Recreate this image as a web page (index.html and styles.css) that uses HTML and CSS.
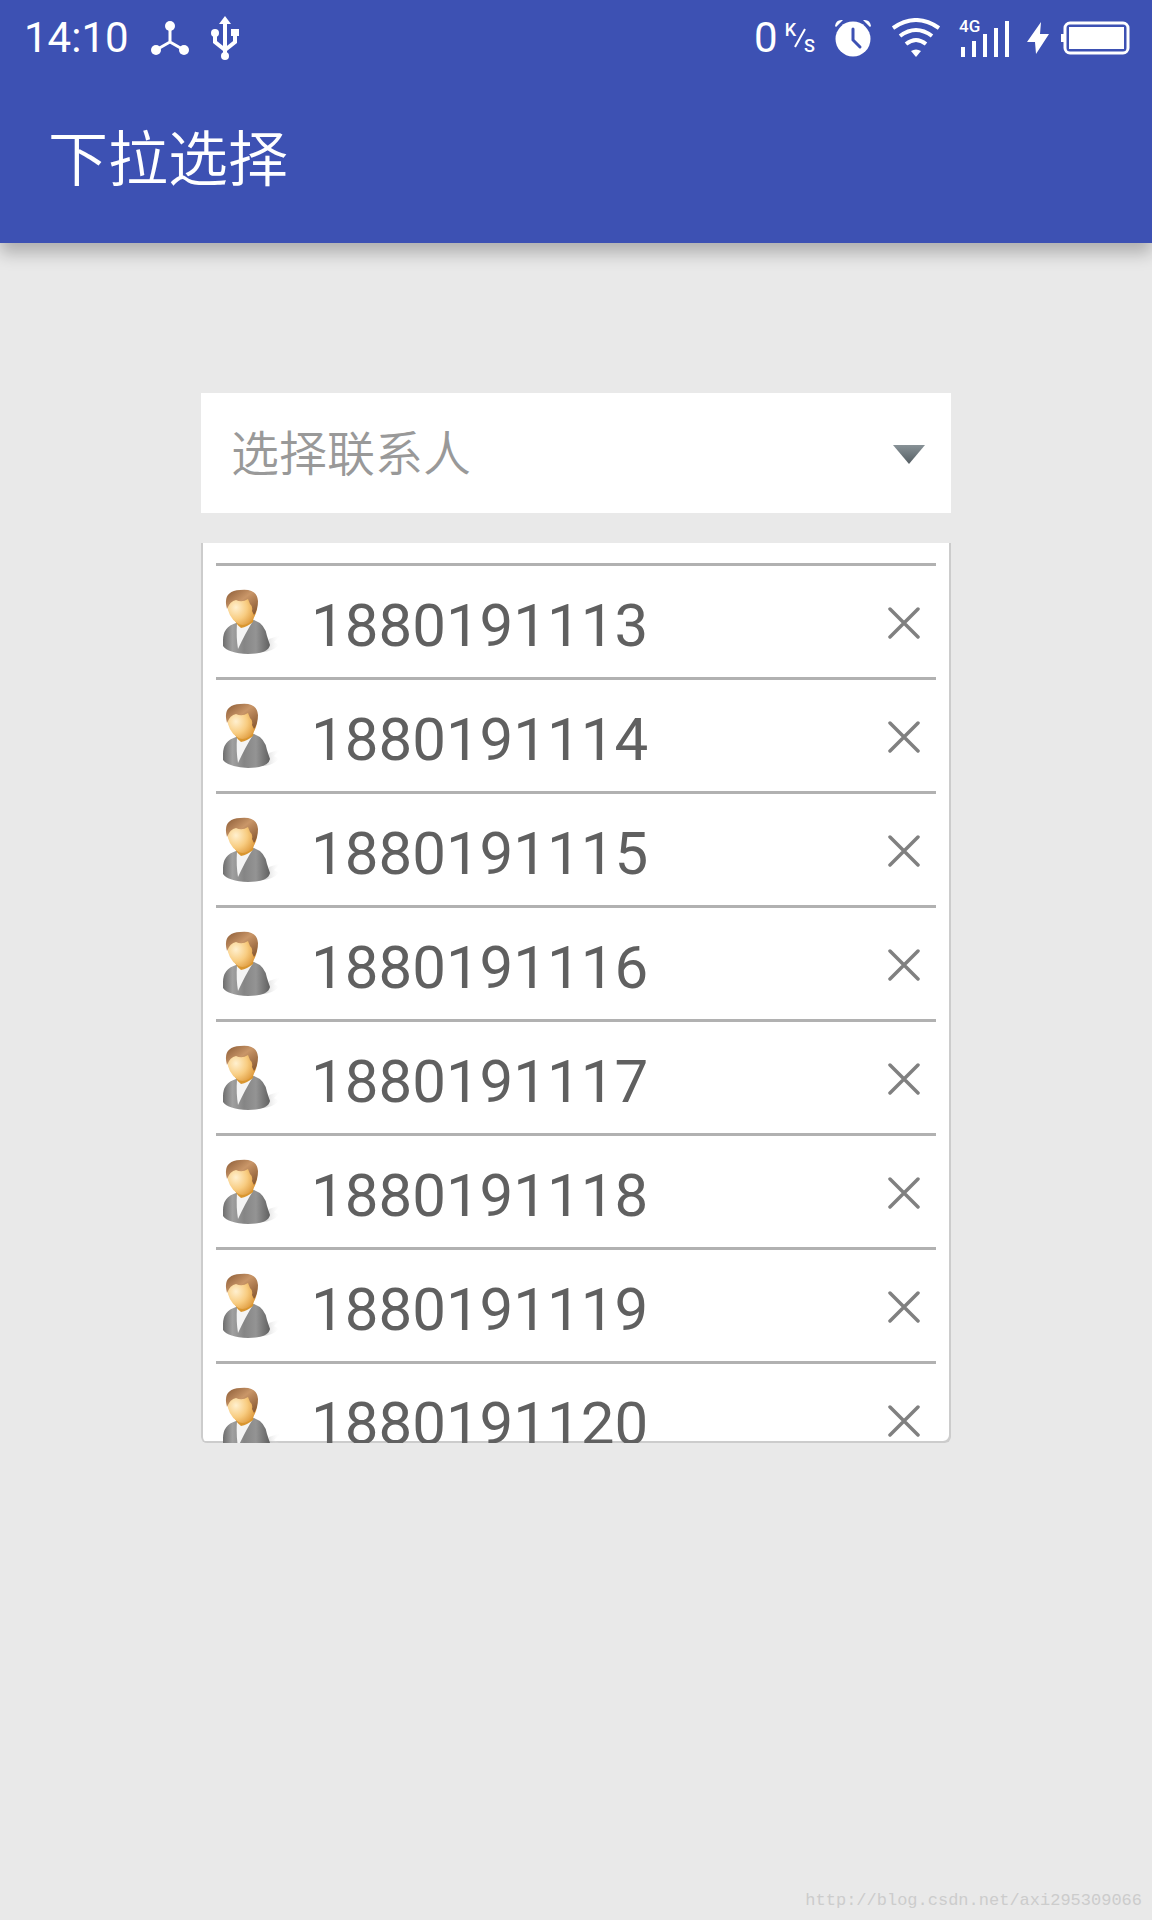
FILE: index.html
```html
<!DOCTYPE html>
<html lang="zh-CN">
<head>
<meta charset="utf-8">
<meta name="viewport" content="width=device-width, initial-scale=1">
<title>下拉选择</title>
<link rel="stylesheet" href="styles.css">
</head>
<body>
<svg class="defs" aria-hidden="true">
  <defs>
    <linearGradient id="hair" x1="0" y1="0" x2="1" y2="1"><stop offset="0" stop-color="#8a5a35"/><stop offset=".45" stop-color="#c99668"/><stop offset="1" stop-color="#80502a"/></linearGradient>
    <radialGradient id="face" cx=".3" cy=".45" r=".75"><stop offset="0" stop-color="#fff0cf"/><stop offset=".5" stop-color="#f8cc80"/><stop offset="1" stop-color="#d98f2e"/></radialGradient>
    <linearGradient id="suit"><stop offset="0" stop-color="#6e6e6e"/><stop offset=".2" stop-color="#a0a0a0"/><stop offset=".45" stop-color="#858585"/><stop offset=".7" stop-color="#949494"/><stop offset="1" stop-color="#606060"/></linearGradient>
    <linearGradient id="shade"><stop offset="0" stop-color="#999"/><stop offset="1" stop-color="#fff" stop-opacity="0"/></linearGradient>
    <linearGradient id="arrow" x1="0" y1="0" x2="0" y2="1"><stop offset="0" stop-color="#889297"/><stop offset="1" stop-color="#555e63"/></linearGradient>
    <symbol id="person" viewBox="0 0 60 68">
      <path d="M40 61 Q47 57 47 50 L59 46 L52 53 L57 56 Q50 63 40 63Z" fill="url(#shade)" opacity=".6"/>
      <path d="M1 51 Q1 38 14 34 L32 31 Q43 35 45 47 L48 56 Q46 65 26 65 Q6 64 1 57Z" fill="url(#suit)"/>
      <path d="M15 34 L31 32 Q24 43 16 60 Q14 48 15 34Z" fill="#f4f4f4"/>
      <path d="M13 29 L32 25 L31 33 Q25 38 19 39 Q15 36 13 32Z" fill="#d9962f"/>
      <path d="M5 15 Q8 4 22 4 Q35 5 35 19 Q34 29 27 34 Q20 38 15 34 Q6 28 5 15Z" fill="url(#face)"/>
      <path d="M5 20 Q0 2 18 1 Q35 -1 36 12 Q36 21 32 26 L30 22 Q31 17 28 15 L26 10 Q20 14 14 11 Q8 12 5 20Z" fill="url(#hair)"/>
    </symbol>
    <symbol id="cross" viewBox="0 0 32 32"><path d="M2 2 30 30 M30 2 2 30" stroke="#808080" stroke-width="3.5" stroke-linecap="round"/></symbol>
  </defs>
</svg>

<header class="header">
  <div class="status">
    <span class="time">14:10</span>
    <svg class="hub" viewBox="0 0 38 34" aria-hidden="true"><path d="M19 5V21L5 29M19 21L33 29" fill="none" stroke="#fff" stroke-width="3"/><g fill="#fff"><circle cx="19" cy="5" r="5"/><circle cx="5" cy="29" r="5"/><circle cx="33" cy="29" r="5"/></g></svg>
    <svg class="usb" viewBox="0 0 28 44" aria-hidden="true"><path d="M14 5V40M4 17V26L14 34L24 26V17" fill="none" stroke="#fff" stroke-width="4"/><g fill="#fff"><path d="M14 0L20 8H8Z"/><circle cx="4" cy="17" r="4"/><path d="M20 13H28V20H20Z"/><circle cx="14" cy="40" r="4"/></g></svg>
    <span class="speed">0</span>
    <span class="unit"><span>K</span><svg viewBox="0 0 12 20" aria-hidden="true"><path d="M1 19L11 1" stroke="#fff" stroke-width="2"/></svg><span>S</span></span>
    <svg class="alarm" viewBox="0 0 36 38" aria-hidden="true"><circle cx="18" cy="20" r="17.5" fill="#fff"/><path d="M0 7Q1 0 8 1L1 8ZM28 1Q35 0 36 7L35 8Z" fill="#fff"/><path d="M18 10V21L25 28" fill="none" stroke="#3d51b3" stroke-width="3" stroke-linecap="round"/></svg>
    <svg class="wifi" viewBox="0 0 48 40" aria-hidden="true"><g fill="none" stroke="#fff" stroke-width="4"><path d="M1 10Q24 -6 47 10"/><path d="M8 18Q24 6 40 18"/><path d="M14 26Q24 18 34 26"/></g><path d="M19 33Q24 30 29 33L24 39Z" fill="#fff"/></svg>
    <svg class="signal" viewBox="0 0 50 38" aria-hidden="true"><path d="M3 28V38M14 22V38M25 15V38M36 9V38M47 2V38" stroke="#fff" stroke-width="4"/><text class="net" x="-1" y="13">4G</text></svg>
    <svg class="bolt" viewBox="0 0 22 32" aria-hidden="true"><path d="M14 0L0 20H8L9 32L22 12H13Z" fill="#fff"/></svg>
    <svg class="battery" viewBox="0 0 69 34" aria-hidden="true"><rect x="4" y="2" width="63" height="30" rx="5" fill="none" stroke="#fff" stroke-width="3"/><path d="M8 6H63V28H8ZM0 13H3V21H0Z" fill="#fff"/></svg>
  </div>
  <h1 class="title">下拉选择</h1>
</header>

<main class="content">
  <div class="picker">
    <input class="field" type="text" placeholder="选择联系人" aria-label="选择联系人">
    <button class="toggle" type="button" aria-label="展开"><svg viewBox="0 0 34 21" aria-hidden="true"><path d="M1 1H33L17 20Z" fill="url(#arrow)"/></svg></button>
  </div>
  <ul class="list">
    <li class="row"><svg class="avatar" aria-hidden="true"><use href="#person"/></svg><span class="number">1880191113</span><button class="remove" type="button" aria-label="删除 1880191113"><svg><use href="#cross"/></svg></button></li>
    <li class="row"><svg class="avatar" aria-hidden="true"><use href="#person"/></svg><span class="number">1880191114</span><button class="remove" type="button" aria-label="删除 1880191114"><svg><use href="#cross"/></svg></button></li>
    <li class="row"><svg class="avatar" aria-hidden="true"><use href="#person"/></svg><span class="number">1880191115</span><button class="remove" type="button" aria-label="删除 1880191115"><svg><use href="#cross"/></svg></button></li>
    <li class="row"><svg class="avatar" aria-hidden="true"><use href="#person"/></svg><span class="number">1880191116</span><button class="remove" type="button" aria-label="删除 1880191116"><svg><use href="#cross"/></svg></button></li>
    <li class="row"><svg class="avatar" aria-hidden="true"><use href="#person"/></svg><span class="number">1880191117</span><button class="remove" type="button" aria-label="删除 1880191117"><svg><use href="#cross"/></svg></button></li>
    <li class="row"><svg class="avatar" aria-hidden="true"><use href="#person"/></svg><span class="number">1880191118</span><button class="remove" type="button" aria-label="删除 1880191118"><svg><use href="#cross"/></svg></button></li>
    <li class="row"><svg class="avatar" aria-hidden="true"><use href="#person"/></svg><span class="number">1880191119</span><button class="remove" type="button" aria-label="删除 1880191119"><svg><use href="#cross"/></svg></button></li>
    <li class="row"><svg class="avatar" aria-hidden="true"><use href="#person"/></svg><span class="number">1880191120</span><button class="remove" type="button" aria-label="删除 1880191120"><svg><use href="#cross"/></svg></button></li>
  </ul>
</main>

<footer class="footer">http://blog.csdn.net/axi295309066</footer>
</body>
</html>
```
FILE: styles.css
```css
* { box-sizing: border-box; }

body {
  margin: 0;
  min-height: 100vh;
  display: flex;
  flex-direction: column;
  background: #e9e9e9;
  font-family: Roboto, "Noto Sans CJK SC", sans-serif;
}

button { border: 0; padding: 0; background: none; display: flex; }

.defs { position: absolute; width: 0; height: 0; }

.header {
  background: #3d51b3;
  color: #fff;
  box-shadow: 0 10px 16px rgba(0, 0, 0, 0.25);
}

.status {
  display: flex;
  align-items: center;
  height: 75px;
  padding: 0 22px 0 24px;
}

.time, .speed { font-size: 42px; line-height: 48px; }
.hub { width: 38px; height: 34px; margin-left: 22px; }
.usb { width: 28px; height: 44px; margin-left: 22px; }
.speed { margin-left: auto; }

.unit {
  display: flex;
  margin-left: 7px;
  height: 32px;
  font-size: 18px;
  line-height: 16px;
  font-weight: 500;
}
.unit svg { width: 12px; height: 20px; margin: 0 -2px; align-self: center; }
.unit span:last-child { align-self: flex-end; }

.alarm { width: 36px; height: 38px; margin-left: 20px; }
.wifi { width: 48px; height: 40px; margin-left: 21px; }
.signal { width: 50px; height: 38px; margin-left: 20px; overflow: visible; }
.net { font-size: 17px; font-weight: 500; fill: #fff; }
.bolt { width: 22px; height: 32px; margin-left: 17px; }
.battery { width: 69px; height: 34px; margin-left: 12px; }

.title {
  margin: 0;
  padding: 42px 48px 38px;
  font-size: 60px;
  line-height: 88px;
  font-weight: 350;
}

.content {
  flex: 1;
  width: 100%;
  max-width: 750px;
  margin: 0 auto;
  padding-top: 150px;
}

.picker {
  display: flex;
  align-items: center;
  height: 120px;
  padding: 2px 25px 0 30px;
  background: #fff;
}

.field {
  flex: 1;
  min-width: 0;
  border: 0;
  padding: 2px 0 0;
  background: none;
  font: 350 48px/72px Roboto, "Noto Sans CJK SC", sans-serif;
}
.field::placeholder { color: #999; opacity: 1; }

.toggle svg { width: 34px; height: 21px; }

.list {
  height: 900px;
  margin: 30px 0 0;
  padding: 20px 15px 0;
  overflow: hidden;
  list-style: none;
  background: #fff;
  border-radius: 0 0 6px 6px;
  box-shadow: inset 2px 0 #ccc, inset -2px -2px #ccc;
}

.row {
  display: flex;
  align-items: center;
  height: 114px;
  padding: 2px 16px 0 6px;
  border-top: 3px solid #b1b1b1;
}

.avatar { width: 60px; height: 68px; }
.number {
  flex: 1;
  margin-left: 29px;
  padding-top: 6px;
  font-size: 60px;
  line-height: 72px;
  color: #606060;
}
.remove svg { width: 32px; height: 32px; }

.footer {
  padding: 0 10px 7px;
  text-align: right;
  font: 17px/24px "Liberation Mono", monospace;
  color: #ccc;
}
```
